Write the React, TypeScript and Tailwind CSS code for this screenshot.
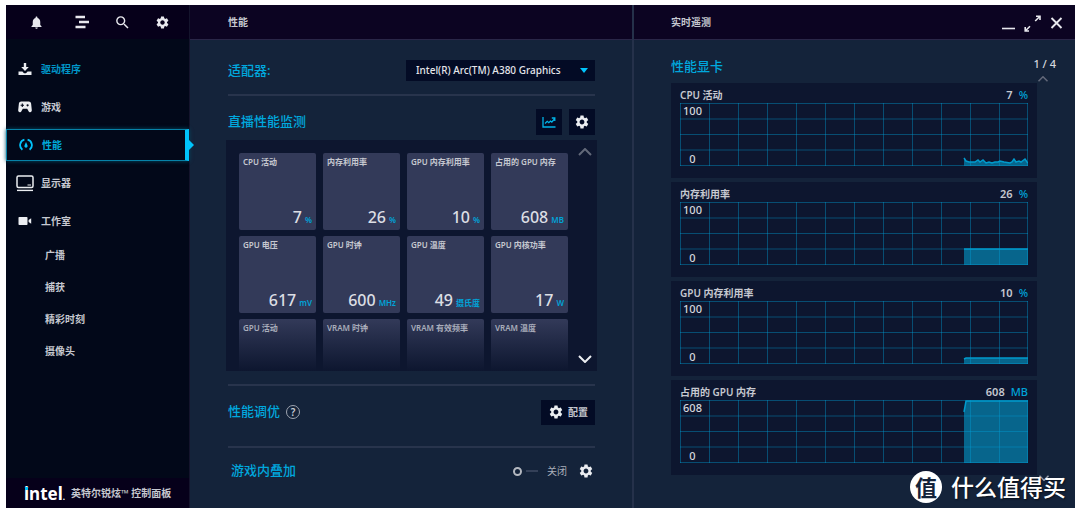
import { useState } from 'react';
import type { ReactNode } from 'react';
import { MdNotifications, MdSearch, MdSettings } from 'react-icons/md';

type Metric = { label: string; value: string; unit: string };
type Chart = Metric & { max: string; line: string };

const metrics: Metric[] = [
    { label: 'CPU 活动', value: '7', unit: '%' },
    { label: '内存利用率', value: '26', unit: '%' },
    { label: 'GPU 内存利用率', value: '10', unit: '%' },
    { label: '占用的 GPU 内存', value: '608', unit: 'MB' },
    { label: 'GPU 电压', value: '617', unit: 'mV' },
    { label: 'GPU 时钟', value: '600', unit: 'MHz' },
    { label: 'GPU 温度', value: '49', unit: '摄氏度' },
    { label: 'GPU 内核功率', value: '17', unit: 'W' },
];

const fadedMetrics = ['GPU 活动', 'VRAM 时钟', 'VRAM 有效频率', 'VRAM 温度'];

// Lines are drawn in a 348 x 63 box, samples start at x = 284
const charts: Chart[] = [
    {
        label: 'CPU 活动', value: '7', unit: '%', max: '100',
        line: '284,55 286,58 289,59 295,59 298,57 300,59 303,57 306,60 309,59 312,60 315,59 318,59 320,58 324,59 330,60 332,59 334,56 336,59 339,58 341,59 345,56 347,59 348,60',
    },
    { label: '内存利用率', value: '26', unit: '%', max: '100', line: '284,47 348,47' },
    { label: 'GPU 内存利用率', value: '10', unit: '%', max: '100', line: '284,58 286,57 348,57' },
    { label: '占用的 GPU 内存', value: '608', unit: 'MB', max: '608', line: '284,12 286,1 348,1' },
];

const subItems = ['广播', '捕获', '精彩时刻', '摄像头'];

function DownloadIcon() {
    return (
        <svg width="14" height="14" viewBox="0 0 14 14" fill="currentColor" aria-hidden="true">
            <path d="M5.8 1h2.4v4h2.6L7 9 3.2 5h2.6z" />
            <path d="M.5 9.6h3.9L6 11.2h2l1.600-1.600h3.900V13H.5z" />
        </svg>
    );
}

function GamepadIcon() {
    return (
        <svg width="14" height="12" viewBox="0 0 14 12" aria-hidden="true">
            <path
                d="M3.300.6h7.400c1.300 0 2.200.8 2.400 2l.7 6.500c.1 1.300-.6 2.200-1.600 2.200-.8 0-1.200-.4-1.600-1.100L9.200 7.700H4.800l-1.400 2.500c-.4.7-.8 1.100-1.600 1.100-1 0-1.700-.9-1.600-2.200l.7-6.500c.2-1.200 1.100-2 2.400-2z"
                fill="currentColor"
            />
            <path d="M4.300 2.600v3.400M2.600 4.300H6" stroke="#020819" strokeWidth="1.1" />
            <circle cx="9.600" cy="4.300" r="1.100" fill="#020819" />
        </svg>
    );
}

function GaugeIcon() {
    return (
        <svg width="14" height="14" viewBox="0 0 14 14" fill="none" stroke="currentColor" aria-hidden="true">
            <path d="M3.4 11.8A5.8 5.8 0 0 1 5.4 1.6M10.6 11.8A5.8 5.8 0 0 0 8.6 1.6" strokeWidth="1.8" />
            <path d="M7 4l1.5 3.6a1.6 1.6 0 1 1-3 0z" fill="currentColor" stroke="none" />
        </svg>
    );
}

function MonitorIcon() {
    return (
        <svg width="18" height="17" viewBox="0 0 18 17" fill="none" stroke="currentColor" aria-hidden="true">
            <rect x="1" y="1" width="16" height="11.6" rx="1.5" strokeWidth="1.5" />
            <path d="M11.5 10h3.5" strokeWidth="1" />
            <path d="M1 15.4h16" strokeWidth="1.4" />
        </svg>
    );
}

function VideoIcon() {
    return (
        <svg width="14" height="10" viewBox="0 0 14 10" fill="currentColor" aria-hidden="true">
            <rect x=".5" y="1" width="9" height="8" rx=".8" />
            <path d="M13.2 2.2v5.6L10.6 6V4z" />
        </svg>
    );
}

function Chevron({ down, className }: { down?: boolean; className?: string }) {
    return (
        <svg viewBox="0 0 14 8" fill="none" stroke="currentColor" strokeWidth="2" className={className} aria-hidden="true">
            <path d={down ? 'M1 1l6 6 6-6' : 'M1 7l6-6 6 6'} />
        </svg>
    );
}

function NavItem({ icon, label, active, current }: { icon: ReactNode; label: string; active?: boolean; current?: boolean }) {
    return (
        <a
            href="#"
            aria-current={current ? 'page' : undefined}
            className={`relative flex h-8 items-center gap-1.5 pl-[9px] ${current
                ? 'border border-r-4 border-[#0782a8] border-r-[#00c3fb] text-[#00a9da] shadow-[0_0_4px_#00506b]'
                : active ? 'text-[#0096c8]' : 'text-[#c6c8d0]'}`}
        >
            <span className={`flex w-5 justify-center ${current ? 'text-[#00c3fb]' : 'text-[#eceef2]'}`}>{icon}</span>
            {label}
            {current && (
                <svg width="6" height="12" viewBox="0 0 6 12" className="absolute -right-[9px] top-[9px] fill-[#00c3fb]" aria-hidden="true">
                    <path d="M0 0l6 6-6 6z" />
                </svg>
            )}
        </a>
    );
}

function Sidebar() {
    return (
        <aside className="relative z-10 flex w-[184px] shrink-0 flex-col border-r border-[#14142c] bg-[#020819]">
            <div className="flex h-[34px] items-center bg-[#06001a] pl-1 text-[#e8e8ee]">
                <button aria-label="通知" className="flex w-[52px] justify-center">
                    <MdNotifications size={15} />
                </button>
                <button aria-label="菜单" className="flex w-10 justify-center">
                    <svg width="14" height="14" viewBox="0 0 14 14" stroke="currentColor" strokeWidth="2.4" aria-hidden="true">
                        <path d="M.5 2h9.500M4 7h10M.5 12h10" />
                    </svg>
                </button>
                <button aria-label="搜索" className="flex w-10 justify-center">
                    <MdSearch size={17} />
                </button>
                <button aria-label="设置" className="flex w-10 justify-center">
                    <MdSettings size={15} />
                </button>
            </div>

            <nav className="flex flex-1 flex-col gap-1.5 pt-3.5 text-[10px] font-semibold">
                <NavItem icon={<DownloadIcon />} label="驱动程序" active />
                <NavItem icon={<GamepadIcon />} label="游戏" />
                <NavItem icon={<GaugeIcon />} label="性能" current />
                <NavItem icon={<MonitorIcon />} label="显示器" />
                <NavItem icon={<VideoIcon />} label="工作室" />
                <div className="flex flex-col pl-[39px] text-[#c6c8d0]">
                    {subItems.map((item) => (
                        <a key={item} href="#" className="flex h-8 items-center first:-mt-1">{item}</a>
                    ))}
                </div>
            </nav>

            <footer className="flex h-[30px] items-center gap-1.5 bg-[#06001a] pl-[18px] text-[#c6c8d0]">
                <span className="relative text-[17px] font-bold leading-none text-white">
                    intel<span className="text-[8px]">.</span>
                    <span className="absolute left-px top-0.5 h-[3px] w-[3px] bg-[#00c3fb]" />
                </span>
                <span className="whitespace-nowrap text-[10px] font-semibold">英特尔锐炫™ 控制面板</span>
            </footer>
        </aside>
    );
}

function Tile({ label, value, unit }: Metric) {
    return (
        <div className="flex h-[77px] w-[77px] flex-col justify-between rounded-xs bg-[#333a59] px-1 pt-[3px]">
            <span className="whitespace-nowrap text-[8px] font-semibold leading-3 text-[#c6c8d0]">{label}</span>
            <span className="flex items-baseline justify-end gap-[3px] text-base font-medium leading-5 text-[#dcdee4]">
                {value}
                <span className="text-[8px] font-semibold text-[#00a3d8]">{unit}</span>
            </span>
        </div>
    );
}

function MainPanel() {
    const [overlay, setOverlay] = useState(false);

    return (
        <main className="flex flex-[442] flex-col border-r-2 border-[#25314a] bg-[#14233a]">
            <header className="flex h-[35px] items-center border-b border-[#2a2748] bg-[#0c0422] pl-[38px]">
                <h1 className="text-[10px] font-semibold text-[#c6c8d0]">性能</h1>
            </header>

            <div className="flex flex-col pl-9 pr-[35px]">
                <div className="mx-0.5 flex h-14 items-center justify-between border-b-2 border-[#28344c] pt-1.5">
                    <label htmlFor="adapter" className="text-[13px] font-medium leading-5 text-[#00a8de]">适配器:</label>
                    <div className="relative flex">
                        <select
                            id="adapter"
                            className="h-[21px] w-[189px] appearance-none bg-[#030b25] pl-2.5 text-[10px] font-medium text-[#e4e5ea]"
                        >
                            <option>Intel(R) Arc(TM) A380 Graphics</option>
                        </select>
                        <svg width="8" height="5" viewBox="0 0 8 5" className="pointer-events-none absolute right-[7px] top-2 fill-[#00c3fb]" aria-hidden="true">
                            <path d="M0 0h8L4 5z" />
                        </svg>
                    </div>
                </div>

                <div className="mx-0.5 flex h-11 items-center justify-between pt-2">
                    <h2 className="text-[13px] font-medium text-[#00a8de]">直播性能监测</h2>
                    <div className="flex gap-[7px]">
                        <button aria-label="实时遥测" className="flex h-[26px] w-[26px] items-center justify-center bg-[#030b25] text-[#00b4e8]">
                            <svg width="14" height="12" viewBox="0 0 14 12" fill="none" stroke="currentColor" strokeWidth="1.3" aria-hidden="true">
                                <path d="M1 1v10h12.500M3 7.500l2.200-2.200 1.600 1.400L8.500 5l1.300 1L12.500 3M9.800 2h3v3" />
                            </svg>
                        </button>
                        <button aria-label="监测设置" className="flex h-[26px] w-[26px] items-center justify-center bg-[#030b25] text-[#eceef2]">
                            <MdSettings size={16} />
                        </button>
                    </div>
                </div>

                <section className="flex justify-between bg-[#0d162f] pl-[13px] pr-[5px]">
                    <div className="grid grid-cols-[repeat(4,77px)] gap-x-[7px] gap-y-1.5 pt-[13px]">
                        {metrics.map((m) => <Tile key={m.label} {...m} />)}
                        {fadedMetrics.map((label) => (
                            <div key={label} className="h-[52px] rounded-t-xs bg-linear-to-b from-[#333a59] to-[#0d162f] px-1 pt-[3px]">
                                <span className="block whitespace-nowrap text-[8px] font-semibold leading-3 text-[#a9adbb]">{label}</span>
                            </div>
                        ))}
                    </div>
                    <div className="flex flex-col justify-between pb-2 pt-2">
                        <button aria-label="向上"><Chevron className="h-2 w-3.5 text-[#626879]" /></button>
                        <button aria-label="向下"><Chevron down className="h-2 w-3.5 text-[#eceef2]" /></button>
                    </div>
                </section>

                <div className="mx-0.5 mt-[13px] flex h-[62px] items-center justify-between border-t-2 border-[#28344c] pb-2">
                    <div className="flex items-center gap-1.5">
                        <h2 className="text-[13px] font-medium text-[#00a8de]">性能调优</h2>
                        <button
                            aria-label="帮助"
                            className="flex h-3.5 w-3.5 items-center justify-center rounded-full border border-[#9ea4b0] text-[10px] font-semibold leading-none text-[#c6cad2]"
                        >
                            ?
                        </button>
                    </div>
                    <button className="flex h-[25px] items-center gap-1 bg-[#030b25] px-[7px] text-[10px] font-semibold text-[#c6c8d0]">
                        <MdSettings size={16} className="text-[#eceef2]" />
                        配置
                    </button>
                </div>

                <div className="mx-0.5 flex h-12 items-center justify-between border-t-2 border-[#28344c] pl-[3px] pr-px">
                    <h2 className="text-[13px] font-medium text-[#00a8de]">游戏内叠加</h2>
                    <div className="flex items-center gap-[11px]">
                        <label className="flex items-center text-[10px] text-[#a9aeb9]">
                            <input
                                type="checkbox"
                                checked={overlay}
                                onChange={(e) => setOverlay(e.target.checked)}
                                className="h-[9px] w-[9px] appearance-none rounded-full border-2 border-[#b4b8c0]"
                            />
                            <span className="ml-1 mr-[9px] h-0.5 w-3 bg-[#344058]" />
                            关闭
                        </label>
                        <button aria-label="叠加设置" className="text-[#eceef2]"><MdSettings size={16} /></button>
                    </div>
                </div>
            </div>
        </main>
    );
}

function ChartCard({ label, value, unit, max, line }: Chart) {
    return (
        <div className="bg-[#0d162f] px-[9px] pb-3">
            <div className="flex h-5 items-center pt-1 text-[10px] font-semibold text-[#c6c8d0]">
                <span className="flex-1">{label}</span>
                <span className="text-[11px]">{value}</span>
                <span className="ml-1.5 text-[11px] font-medium text-[#00a3d8]">{unit}</span>
            </div>
            <div className="relative">
                <svg viewBox="0 0 348 63" preserveAspectRatio="none" className="block h-[63px] w-full" aria-hidden="true">
                    <polygon points={`284,63 ${line} 348,63`} fill="#07658c" />
                    <g stroke="#00a0d8" strokeOpacity=".4">
                        {Array.from({ length: 13 }, (_, i) => (
                            <line key={i} x1={Math.min(i * 29 + 0.5, 347.5)} x2={Math.min(i * 29 + 0.5, 347.5)} y1="0" y2="63" />
                        ))}
                        {[0.5, 16, 31.5, 47, 62.5].map((y) => <line key={y} x1="0" x2="348" y1={y} y2={y} />)}
                    </g>
                    <polyline points={line} fill="none" stroke="#009bcd" strokeWidth="1.5" />
                </svg>
                <div className="absolute inset-y-0 left-0.5 flex w-[21px] flex-col justify-between text-center text-[11px] font-medium leading-[15px] text-[#d6d8de]">
                    <span>{max}</span>
                    <span>0</span>
                </div>
            </div>
        </div>
    );
}

function TelemetryPanel() {
    return (
        <section className="flex flex-[441] flex-col bg-[#14233a]">
            <header className="flex h-[35px] items-center justify-between border-b border-[#2a2748] bg-[#0c0422] pl-[37px] pr-3 text-[#e8e8ee]">
                <h1 className="text-[10px] font-semibold text-[#c6c8d0]">实时遥测</h1>
                <div className="flex items-center gap-[9px] pt-0.5">
                    <button aria-label="最小化">
                        <svg width="13" height="16" viewBox="0 0 13 16" stroke="currentColor" strokeWidth="1.6" aria-hidden="true">
                            <path d="M0 13.5h13" />
                        </svg>
                    </button>
                    <button aria-label="最大化">
                        <svg width="17" height="17" viewBox="0 0 17 17" fill="none" stroke="currentColor" strokeWidth="1.6" aria-hidden="true">
                            <path d="M12 1.2h4V5M16 1.2l-4.8 4.8M1.2 12v4H5M1.2 16L6 11.2" />
                        </svg>
                    </button>
                    <button aria-label="关闭窗口">
                        <svg width="13" height="12" viewBox="0 0 13 12" stroke="currentColor" strokeWidth="1.9" aria-hidden="true">
                            <path d="M1.5 1l10 10M11.5 1l-10 10" />
                        </svg>
                    </button>
                </div>
            </header>

            <div className="flex h-[43px] items-start justify-between pl-[37px] pr-[19px] pt-4">
                <h2 className="text-[13px] font-medium leading-5 text-[#00a8de]">性能显卡</h2>
                <div className="flex flex-col gap-1 text-[11px] font-medium leading-4 text-[#d6d8de]">
                    1 / 4
                    <button aria-label="上一页" className="pl-1"><Chevron className="h-1.5 w-3 text-[#626879]" /></button>
                </div>
            </div>

            <div className="flex flex-col gap-1 pl-[37px] pr-[38px]">
                {charts.map((c) => <ChartCard key={c.label} {...c} />)}
            </div>
            <button aria-label="下一页" className="mr-[25px] self-end">
                <Chevron down className="h-1.5 w-3 text-[#9ea4b0]" />
            </button>
        </section>
    );
}

export default function App() {
    return (
        <div className="relative flex min-h-screen bg-white py-[5px] pl-1.5 pr-[5px] font-['Noto_Sans','Noto_Sans_CJK_SC',sans-serif]">
            <Sidebar />
            <MainPanel />
            <TelemetryPanel />

            {/* Watermark */}
            <div className="pointer-events-none absolute bottom-2.5 right-3.5 flex items-center gap-[9px] text-white">
                <span className="flex h-8 w-8 items-center justify-center rounded-full bg-white text-[22px] font-bold leading-none text-[#14233a]">
                    值
                </span>
                <span className="text-[23px] font-medium leading-8 [text-shadow:1px_1px_2px_#0009]">什么值得买</span>
            </div>
        </div>
    );
}
